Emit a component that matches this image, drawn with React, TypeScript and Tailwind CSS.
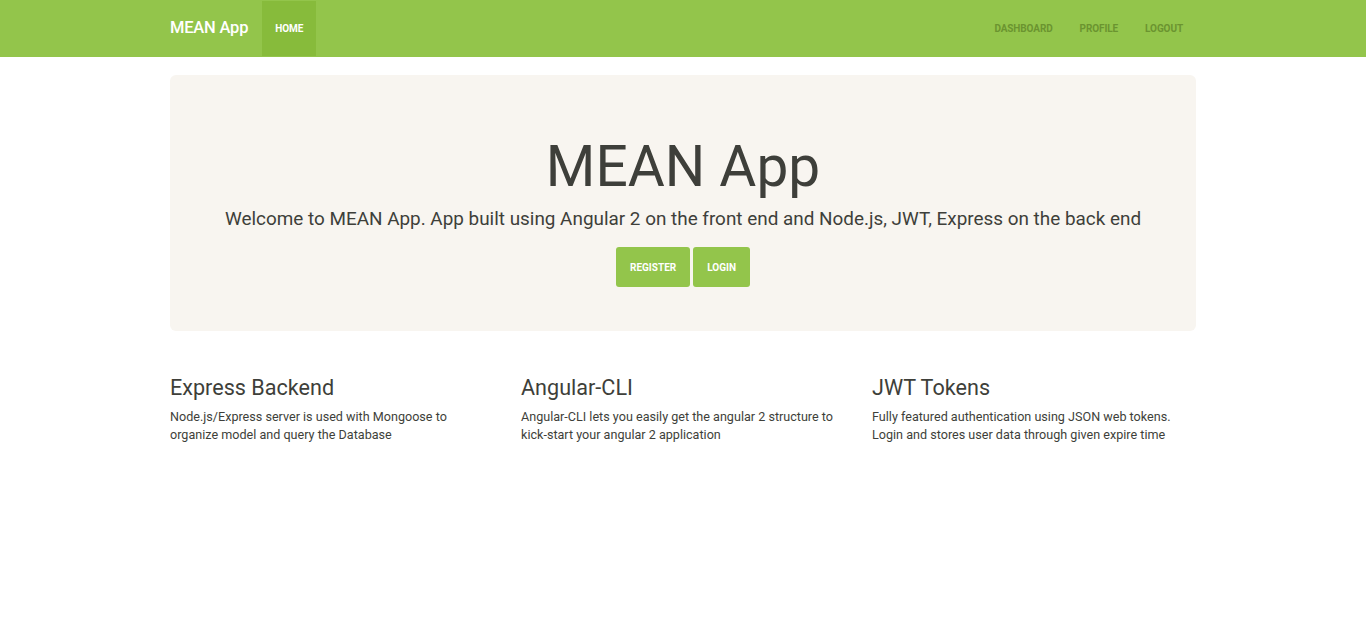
import React from "react";

export default function App() {
  const font = { fontFamily: "Roboto, 'Helvetica Neue', Arial, sans-serif" };
  return (
    <div className="min-h-[644px] bg-white text-[#3e3f3a]" style={font}>
      <nav className="h-[57px] bg-[#93c54b]">
        <div className="mx-auto flex h-full w-[1026px] items-stretch">
          <a className="flex items-center pr-[14px] text-[16.5px] font-medium tracking-[-0.2px] text-white">
            MEAN App
          </a>
          <a className="mt-px mb-px flex items-center bg-[#87bb3b] px-[13px] text-[10px] font-bold uppercase tracking-[-0.1px] text-white">
            Home
          </a>
          <div className="ml-auto flex items-stretch">
            {["Dashboard", "Profile", "Logout"].map((l, i) => (
              <a
                key={l}
                className={`flex items-center text-[10px] font-bold uppercase tracking-[-0.1px] text-[#6b9430] ${i === 2 ? "pl-[13.5px] pr-[13px]" : "px-[13.5px]"}`}
              >
                {l}
              </a>
            ))}
          </div>
        </div>
      </nav>
      <div className="mx-auto w-[1026px]">
        <div className="mt-[18px] flex h-[256px] flex-col items-center rounded-[6px] bg-[#f8f5f0] pt-[60px]">
          <h1 className="text-[56.8px] leading-[63px] font-normal">MEAN App</h1>
          <p className="mt-[7px] text-[18.9px] leading-[27px]">
            Welcome to MEAN App. App built using Angular 2 on the front end and Node.js, JWT, Express on the back end
          </p>
          <div className="mt-[15px] flex gap-[3px]">
            <a className="flex h-[40px] items-center rounded-[3px] bg-[#93c54b] px-[14px] text-[10px] font-bold uppercase text-white">
              Register
            </a>
            <a className="flex h-[40px] items-center rounded-[3px] bg-[#93c54b] px-[14px] text-[10px] font-bold uppercase text-white">
              Login
            </a>
          </div>
        </div>
        <div className="mt-[45px] grid grid-cols-3 gap-[27px]">
          {[
            ["Express Backend", "Node.js/Express server is used with Mongoose to organize model and query the Database"],
            ["Angular-CLI", "Angular-CLI lets you easily get the angular 2 structure to kick-start your angular 2 application"],
            ["JWT Tokens", "Fully featured authentication using JSON web tokens. Login and stores user data through given expire time"],
          ].map(([h, p]) => (
            <div key={h} className="pr-[10px]">
              <h3 className="text-[21.6px] leading-[24px] font-normal">{h}</h3>
              <p className="mt-[8px] text-[12.6px] leading-[18px]">{p}</p>
            </div>
          ))}
        </div>
      </div>
    </div>
  );
}
